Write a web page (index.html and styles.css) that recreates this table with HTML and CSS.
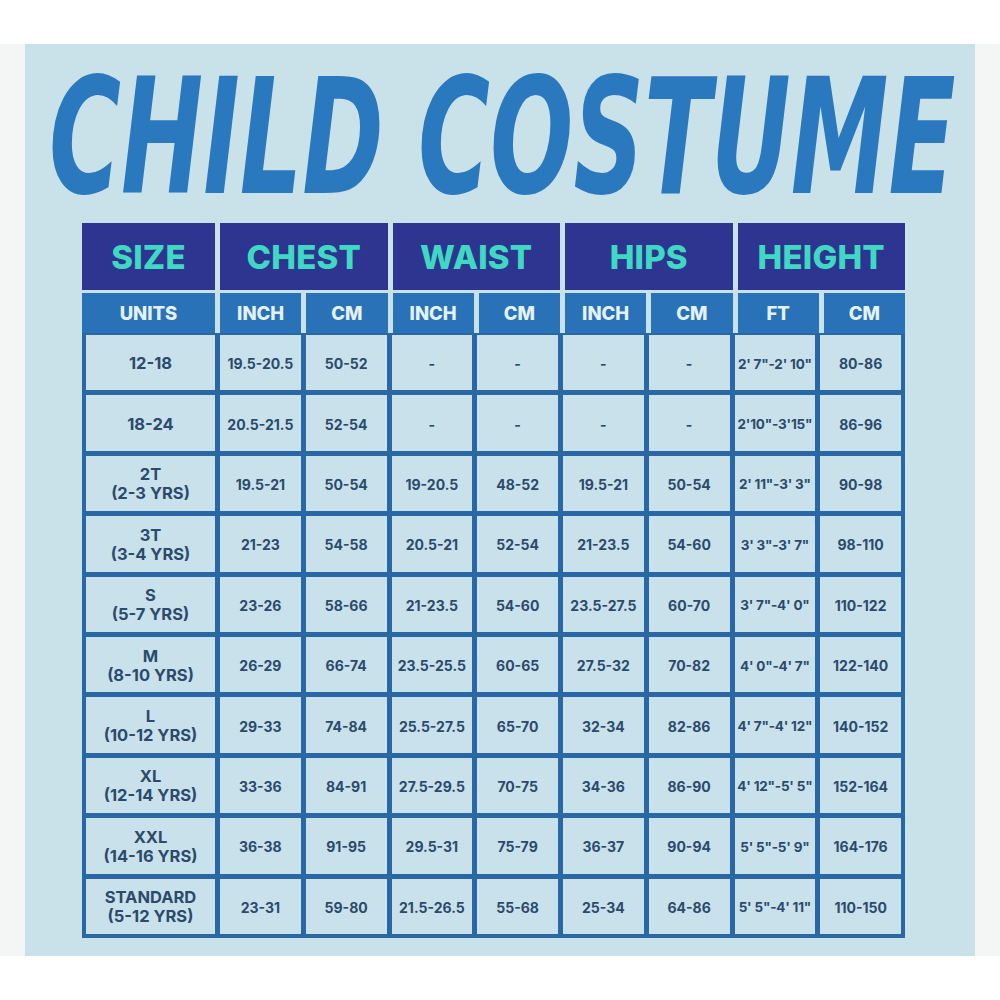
FILE: index.html
```html
<!DOCTYPE html>
<html>
<head>
<meta charset="utf-8">
<link rel="stylesheet" href="styles.css">
</head>
<body>
<div class="frame">
  <div class="panel">
    <div class="title-wrap"><h1 class="title">CHILD COSTUME</h1></div>
    <div class="chart">
      <div class="group-row">
        <div class="group">SIZE</div>
        <div class="group span2">CHEST</div>
        <div class="group span2">WAIST</div>
        <div class="group span2">HIPS</div>
        <div class="group span2">HEIGHT</div>
      </div>
      <div class="unit-row">
        <div class="unit">UNITS</div>
        <div class="unit">INCH</div><div class="unit">CM</div>
        <div class="unit">INCH</div><div class="unit">CM</div>
        <div class="unit">INCH</div><div class="unit">CM</div>
        <div class="unit">FT</div><div class="unit">CM</div>
      </div>
      <div class="data">
        <div class="cell size">12-18</div><div class="cell">19.5-20.5</div><div class="cell">50-52</div><div class="cell">-</div><div class="cell">-</div><div class="cell">-</div><div class="cell">-</div><div class="cell ft">2' 7"-2' 10"</div><div class="cell">80-86</div>
        <div class="cell size">18-24</div><div class="cell">20.5-21.5</div><div class="cell">52-54</div><div class="cell">-</div><div class="cell">-</div><div class="cell">-</div><div class="cell">-</div><div class="cell ft">2'10"-3'15"</div><div class="cell">86-96</div>
        <div class="cell size">2T<br>(2-3 YRS)</div><div class="cell">19.5-21</div><div class="cell">50-54</div><div class="cell">19-20.5</div><div class="cell">48-52</div><div class="cell">19.5-21</div><div class="cell">50-54</div><div class="cell ft">2' 11"-3' 3"</div><div class="cell">90-98</div>
        <div class="cell size">3T<br>(3-4 YRS)</div><div class="cell">21-23</div><div class="cell">54-58</div><div class="cell">20.5-21</div><div class="cell">52-54</div><div class="cell">21-23.5</div><div class="cell">54-60</div><div class="cell ft">3' 3"-3' 7"</div><div class="cell">98-110</div>
        <div class="cell size">S<br>(5-7 YRS)</div><div class="cell">23-26</div><div class="cell">58-66</div><div class="cell">21-23.5</div><div class="cell">54-60</div><div class="cell">23.5-27.5</div><div class="cell">60-70</div><div class="cell ft">3' 7"-4' 0"</div><div class="cell">110-122</div>
        <div class="cell size">M<br>(8-10 YRS)</div><div class="cell">26-29</div><div class="cell">66-74</div><div class="cell">23.5-25.5</div><div class="cell">60-65</div><div class="cell">27.5-32</div><div class="cell">70-82</div><div class="cell ft">4' 0"-4' 7"</div><div class="cell">122-140</div>
        <div class="cell size">L<br>(10-12 YRS)</div><div class="cell">29-33</div><div class="cell">74-84</div><div class="cell">25.5-27.5</div><div class="cell">65-70</div><div class="cell">32-34</div><div class="cell">82-86</div><div class="cell ft">4' 7"-4' 12"</div><div class="cell">140-152</div>
        <div class="cell size">XL<br>(12-14 YRS)</div><div class="cell">33-36</div><div class="cell">84-91</div><div class="cell">27.5-29.5</div><div class="cell">70-75</div><div class="cell">34-36</div><div class="cell">86-90</div><div class="cell ft">4' 12"-5' 5"</div><div class="cell">152-164</div>
        <div class="cell size">XXL<br>(14-16 YRS)</div><div class="cell">36-38</div><div class="cell">91-95</div><div class="cell">29.5-31</div><div class="cell">75-79</div><div class="cell">36-37</div><div class="cell">90-94</div><div class="cell ft">5' 5"-5' 9"</div><div class="cell">164-176</div>
        <div class="cell size">STANDARD<br>(5-12 YRS)</div><div class="cell">23-31</div><div class="cell">59-80</div><div class="cell">21.5-26.5</div><div class="cell">55-68</div><div class="cell">25-34</div><div class="cell">64-86</div><div class="cell ft">5' 5"-4' 11"</div><div class="cell">110-150</div>
      </div>
    </div>
  </div>
</div>
</body>
</html>
```

FILE: styles.css
```css
html, body {
  margin: 0;
  padding: 0;
  background: #ffffff;
}
.frame {
  margin-top: 44px;
  height: 912px;
  background: #f4f5f5;
  padding: 0 25px;
}
.panel {
  height: 912px;
  background: #c9e1e9;
  padding-left: 57px;
  box-sizing: border-box;
}
.title-wrap {
  height: 179px;
  position: relative;
}
.title {
  margin: 0;
  position: absolute;
  left: -33px;
  top: 14px;
  font-family: "DejaVu Sans Condensed", "Liberation Sans", sans-serif;
  font-weight: 700;
  font-style: italic;
  font-size: 160px;
  line-height: 1;
  color: #2a79be;
  white-space: nowrap;
  transform-origin: 0 0;
  transform: scaleX(0.682);
  letter-spacing: 0;
}
.chart {
  width: 823px;
  font-family: Inter, "Open Sans", sans-serif;
}
.group-row, .unit-row {
  display: grid;
  grid-template-columns: 133px repeat(8, 1fr);
  column-gap: 5px;
}
.group-row {
  height: 67px;
  margin-bottom: 3px;
}
.group {
  background: #2e3590;
  color: #3fd8c3;
  font-weight: 800;
  font-size: 33px;
  display: flex;
  align-items: center;
  justify-content: center;
  letter-spacing: 0.2px;
}
.span2 {
  grid-column: span 2;
}
.unit-row {
  height: 40px;
}
.unit {
  background: #2a72b8;
  color: #e4f2f7;
  font-weight: 800;
  font-size: 18.5px;
  display: flex;
  align-items: center;
  justify-content: center;
}
.data {
  display: grid;
  grid-template-columns: 129px repeat(8, 1fr);
  grid-auto-rows: 55.4px;
  gap: 5px;
  padding: 2px 4px 4px 4px;
  background: #2a68a5;
}
.cell {
  background: #c9e1ea;
  color: #2b4a6c;
  font-weight: 700;
  font-size: 14px;
  display: flex;
  align-items: center;
  justify-content: center;
  text-align: center;
  padding-top: 2px;
  box-sizing: border-box;
}
.cell.size {
  font-size: 16.5px;
  line-height: 19px;
}
.cell.ft {
  font-size: 13.5px;
  letter-spacing: -0.2px;
}
```
